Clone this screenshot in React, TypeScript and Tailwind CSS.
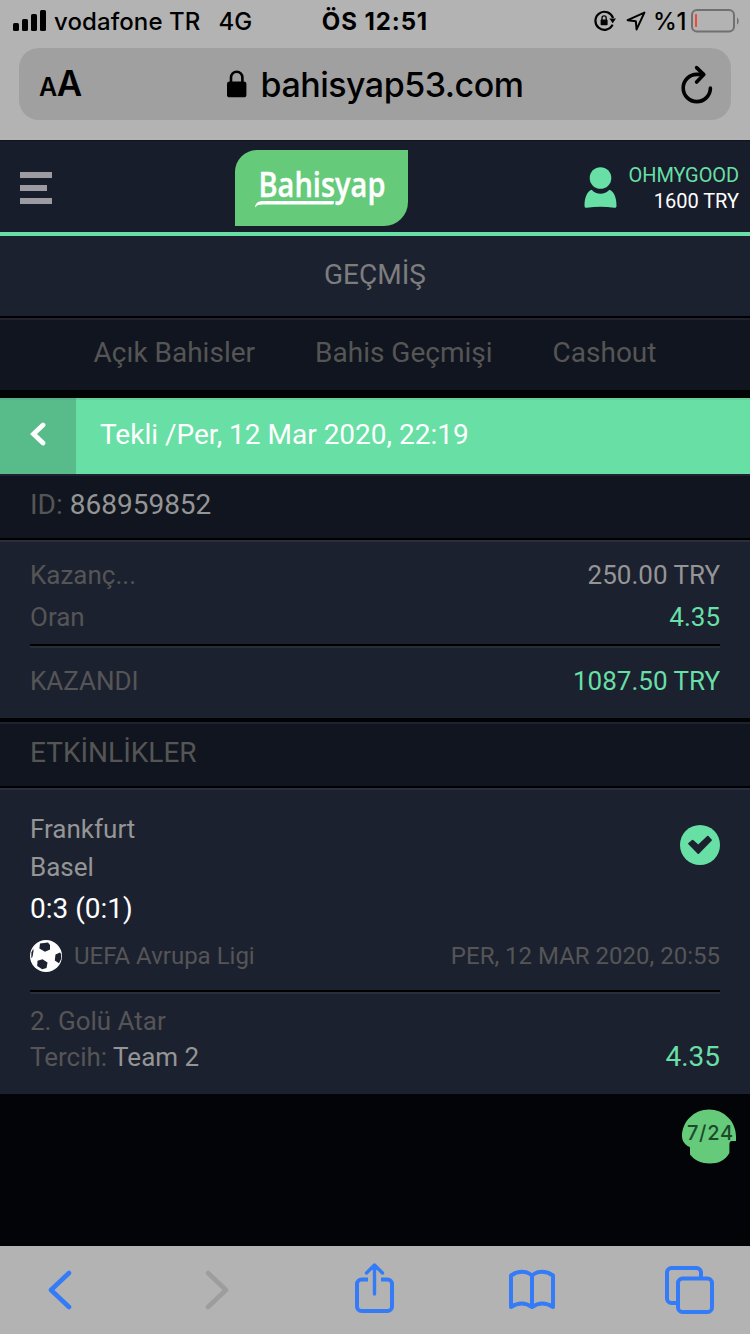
import type { ReactNode } from "react";

const tabs = ["Açık Bahisler", "Bahis Geçmişi", "Cashout"];

function StatusBar() {
  return (
    <div className="grid h-10 grid-cols-[1fr_auto_1fr] items-center text-2xl leading-10 font-medium text-black">
      <div className="flex items-center pl-[13px]">
        <svg width="34" height="22" viewBox="0 0 34 22" className="shrink-0">
          <rect x="0" y="13" width="6" height="8" rx="1.6" />
          <rect x="9" y="9" width="6" height="12" rx="1.6" />
          <rect x="18" y="4" width="6" height="17" rx="1.6" />
          <rect x="27" y="0" width="6" height="21" rx="1.6" />
        </svg>
        <span className="ml-[7px] pt-0.5 tracking-[0.1px]">vodafone TR</span>
        <span className="ml-[18px] pt-0.5">4G</span>
      </div>
      <span className="pt-0.5 font-bold tracking-[0.9px]">ÖS 12:51</span>
      <div className="flex items-center justify-end pr-[10px]">
        <svg width="22" height="22" viewBox="0 0 22 22" className="shrink-0">
          <path d="M18.6 14.6A9 9 0 1 1 19 8" fill="none" stroke="#000" strokeWidth="2.2" />
          <path d="M15.4 8.6h6.6l-3.3 4.6z" />
          <rect x="6.6" y="9.6" width="7" height="5.6" rx="0.8" />
          <path d="M8 10V8a2.1 2.1 0 0 1 4.2 0v2" fill="none" stroke="#000" strokeWidth="1.3" />
        </svg>
        <svg width="20" height="20" viewBox="0 0 20 20" className="ml-[10px] shrink-0">
          <path
            d="M18.4 1.6 1.6 9.2l8.2 1 .8 8.2z"
            fill="none"
            stroke="#000"
            strokeWidth="2"
            strokeLinejoin="round"
          />
        </svg>
        <span className="ml-[7px] pt-0.5 tracking-[-0.4px]">%1</span>
        <svg width="49" height="24" viewBox="0 0 49 24" className="ml-[5px] shrink-0">
          <rect x="1" y="1" width="42" height="21.5" rx="5" fill="none" stroke="#707070" strokeWidth="2" />
          <rect x="4" y="5" width="2" height="13" rx="0.6" fill="#f0493a" />
          <path d="M46 8.4c2.2 1 2.2 6 0 7z" fill="#707070" />
        </svg>
      </div>
    </div>
  );
}

function AddressBar() {
  return (
    <div className="mx-[19px] mt-2 flex h-[72px] items-center justify-between rounded-[20px] bg-[#a0a0a0] text-black">
      <div className="-mt-0.5 flex w-20 items-baseline pl-5 font-semibold">
        <span className="text-[25px] tracking-[-0.5px]">A</span>
        <span className="text-[35px] tracking-[-1px]">A</span>
      </div>
      <div className="flex items-center">
        <svg width="20" height="28" viewBox="0 0 20 28">
          <rect x="0" y="11.5" width="19.4" height="15.8" rx="2.6" />
          <path d="M4 13V7.4a5.7 5.7 0 0 1 11.4 0V13" fill="none" stroke="#000" strokeWidth="2.6" />
        </svg>
        <span className="ml-[14px] pt-px text-[34px] leading-[70px] font-medium tracking-[-0.5px]">
          bahisyap53.com
        </span>
      </div>
      <div className="flex w-20 justify-end pt-px pr-[17px]">
        <svg width="34" height="40" viewBox="0 0 34 40" fill="none" stroke="#000" strokeWidth="3.6" strokeLinecap="round" strokeLinejoin="round">
          <path d="M30.4 23a13.6 13.6 0 1 1-13.6-13.6h6.6" />
          <path d="m16.6 2.6 7.2 7-7.2 7.4" />
        </svg>
      </div>
    </div>
  );
}

function SiteHeader() {
  return (
    <header className="flex h-24 items-center justify-between border-t border-b-4 border-t-[#11131d] border-b-[#67dfa5] bg-[#181d2b] pt-0.5">
      <div className="flex w-[235px] flex-col gap-[7px] pl-5">
        <span className="h-1.5 w-8 bg-[#9c9ba2]" />
        <span className="h-1.5 w-[27px] bg-[#9c9ba2]" />
        <span className="h-1.5 w-8 bg-[#9c9ba2]" />
      </div>
      <svg width="173" height="76" viewBox="0 0 173 76">
        <path d="M22 0H173V52a24 24 0 0 1-24 24H0V22A22 22 0 0 1 22 0z" fill="#65ca7a" />
        <text
          x="23.5"
          y="47"
          textLength="127"
          lengthAdjust="spacingAndGlyphs"
          fill="#fff"
          stroke="#fff"
          strokeWidth="0.4"
          fontSize="34"
          fontWeight="600"
          fontFamily="'Open Sans', 'Noto Sans', sans-serif"
        >
          Bahisyap
        </text>
        <path d="M20 57.4c.6-4.4 3-6.400 8-6.400h70.600c.6 1.600.4 2.600-.6 3.400H28c-4 0-6 .6-8 3z" fill="#fff" />
      </svg>
      <div className="flex w-[342px] items-center justify-end gap-3 pr-[11px]">
        <svg width="34" height="42" viewBox="0 0 34 42" fill="#67dfa5">
          <circle cx="17.500" cy="11" r="10.800" />
          <path d="M8.600 22.700c4.600 5.400 13.200 5.400 17.800 0 4.400 1.600 7.200 7.600 7.100 16 0 1.600-.8 2.200-2.300 2-9-1.200-18-1.200-27.400 0-1.500.2-2.300-.4-2.300-2 0-8.400 2.700-14.400 7.100-16z" />
        </svg>
        <div className="text-right text-xl leading-[26px]">
          <p className="tracking-[-0.1px] text-[#67dfa5]">OHMYGOOD</p>
          <p className="text-white">1600 TRY</p>
        </div>
      </div>
    </header>
  );
}

function Divider() {
  return <div className="h-1 border-t-2 border-t-black bg-[#282d3b]" />;
}

function Row({ label, children }: { label: string; children: ReactNode }) {
  return (
    <div className="flex justify-between text-[26px] leading-[42px]">
      <span className="text-[#555556]">{label}</span>
      {children}
    </div>
  );
}

function BetSummary() {
  return (
    <section className="h-[182px] border-t-2 border-b-4 border-t-[#2a2d3e] border-b-[#010305] bg-[#1c2130] px-[30px] pt-3">
      <Row label="Kazanç...">
        <span className="text-[#959595]">250.00 TRY</span>
      </Row>
      <Row label="Oran">
        <span className="text-[#67dfa5]">4.35</span>
      </Row>
      <div className="mt-1.5 mb-3">
        <Divider />
      </div>
      <Row label="KAZANDI">
        <span className="text-[#67dfa5]">1087.50 TRY</span>
      </Row>
    </section>
  );
}

function Ball() {
  return (
    <svg width="32" height="32" viewBox="0 0 32 32">
      <circle cx="16" cy="16" r="16" fill="#fff" />
      <g fill="#1c2130">
        <path d="M10 3.400 18 2.600 20 5v4.500l-5 2.300-5.600-3.400z" />
        <path d="m25.500 14.500 4.500-2 1.200 1.700v4.600L29 23.200l-4.200-2.600z" />
        <path d="m7.500 20.700 5-1.400 5 3.300-1 5.400-4.300 1.300-5-3.300z" />
        <path d="M1.400 12.500 3.200 8.800l.3 2.200-1 5.800-1.200 1.400z" />
      </g>
    </svg>
  );
}

function EventCard() {
  return (
    <section className="h-[306px] border-t-2 border-t-[#2a2d3e] bg-[#1c2130] px-[30px] pt-5">
      <div className="flex items-start justify-between text-[26px] leading-[38px] text-[#959595]">
        <div>
          <p>Frankfurt</p>
          <p>Basel</p>
          <p className="pt-0.5 text-[28px] leading-[42px] text-white">0:3 (0:1)</p>
        </div>
        <svg width="40" height="40" viewBox="0 0 40 40" className="mt-[15px]">
          <circle cx="20" cy="20" r="20" fill="#67dfa5" />
          <path
            d="m9 18.600 3.600-3 5.700 5 9.500-9 3.200 3.600-12.700 12.800z"
            fill="#1c2130"
            stroke="#1c2130"
            strokeWidth="1.800"
            strokeLinejoin="round"
          />
        </svg>
      </div>
      <div className="mt-[10px] flex h-8 items-center text-2xl text-[#555556]">
        <Ball />
        <span className="ml-3 flex-1">UEFA Avrupa Ligi</span>
        <span>PER, 12 MAR 2020, 20:55</span>
      </div>
      <div className="mt-[18px] mb-[9px]">
        <Divider />
      </div>
      <div className="flex items-end justify-between text-[26px] leading-9 text-[#555556]">
        <div>
          <p>2. Golü Atar</p>
          <p>
            Tercih: <span className="text-[#959595]">Team 2</span>
          </p>
        </div>
        <span className="text-[28px] text-[#67dfa5]">4.35</span>
      </div>
    </section>
  );
}

function SupportBadge() {
  return (
    <svg width="62" height="62" viewBox="0 0 62 62">
      <path
        d="M31 3.500C46 3.500 58 15.500 58 30.500v4.500h-4c-2 0-2.600 1.500-2.600 4v8c-4 7.500-11 10.500-19.400 10.500-8.500 0-15.500-3-20-9v-6.500c0-1-1-1.500-2.500-2C6 37.500 4 34.500 4 30.500 4 15.500 16 3.500 31 3.500z"
        fill="#65ca7a"
      />
      <text
        x="9"
        y="34"
        textLength="46"
        lengthAdjust="spacing"
        fill="#1c4a2b"
        fontSize="20"
        fontWeight="500"
        fontFamily="Inter, sans-serif"
      >
        7/24
      </text>
    </svg>
  );
}

function Toolbar() {
  return (
    <nav className="flex h-[88px] bg-[#b3b3b3]">
      <svg
        width="750"
        height="88"
        viewBox="0 0 750 88"
        fill="none"
        stroke="#347cf7"
        strokeWidth="4"
        strokeLinecap="round"
        strokeLinejoin="round"
      >
        <path d="M69 27 51 44l18 17" strokeWidth="4.600" />
        <path d="m208 27 18 17-18 17" stroke="#9d9d9d" strokeWidth="4.600" />
        <path d="M368 33.500h-6.500a4.500 4.500 0 0 0-4.500 4.500v22.500a4.500 4.500 0 0 0 4.500 4.500h26a4.500 4.500 0 0 0 4.500-4.500V38a4.500 4.500 0 0 0-4.500-4.500H381" strokeLinecap="butt" />
        <path d="M374.500 48V19.500M366.500 27l8-8 8 8" strokeWidth="3.400" />
        <path d="M532 29.500c-5.500-5-14-5-21 0V61c7-4.400 14.500-4.400 21 0 6.500-4.400 14-4.400 21 0V29.500c-7-5-15.500-5-21 0zM532 29.500V61" />
        <path d="M701 32v-5.500a4.500 4.500 0 0 0-4.500-4.500h-25a4.500 4.500 0 0 0-4.500 4.500v26a4.500 4.500 0 0 0 4.500 4.500H677" strokeLinecap="butt" />
        <rect x="678" y="32.500" width="34" height="33.500" rx="4.500" />
      </svg>
    </nav>
  );
}

export default function App() {
  return (
    <div className="flex h-[1334px] w-[750px] flex-col overflow-hidden bg-[#030407] font-['Roboto',sans-serif]">
      <div className="h-[140px] shrink-0 bg-[#b3b3b3] font-['Inter',sans-serif]">
        <StatusBar />
        <AddressBar />
      </div>
      <SiteHeader />

      <h1 className="h-[82px] border-b-2 border-b-black bg-[#1c2130] text-center text-[28px] leading-[77px] text-[#7d7d7e]">
        GEÇMİŞ
      </h1>
      <div className="flex h-20 justify-center gap-[60px] border-t-2 border-b-8 border-t-[#20222f] border-b-[#010305] bg-[#11151f] text-[28px] leading-[65px] text-[#555556]">
        {tabs.map((tab) => (
          <span key={tab}>{tab}</span>
        ))}
      </div>

      <div className="flex h-[76px] bg-[#67dfa5] text-[28px] leading-[73px] text-white">
        <button className="flex w-[76px] items-center justify-center border-t-2 border-t-[#56b088] bg-[#57bb8a]">
          <svg width="16" height="26" viewBox="0 0 16 26" className="-mt-[7px]">
            <path d="m13 4-9.500 9 9.500 9" fill="none" stroke="#fff" strokeWidth="4.800" strokeLinecap="round" />
          </svg>
        </button>
        <span className="flex-1 border-t-2 border-t-[#64d19d] pl-6 leading-[69px]">
          Tekli /Per, 12 Mar 2020, 22:19
        </span>
      </div>

      <div className="h-[66px] border-t-2 border-b-2 border-t-[#20222f] border-b-black bg-[#11151f] px-[30px] text-[28px] leading-[58px] text-[#555556]">
        ID: <span className="text-[#959595]">868959852</span>
      </div>
      <BetSummary />
      <h2 className="h-[66px] border-t-2 border-b-2 border-t-[#20222f] border-b-black bg-[#11151f] px-[30px] text-[28px] leading-[58px] text-[#555556]">
        ETKİNLİKLER
      </h2>
      <EventCard />

      <div className="flex flex-1 items-start justify-end pt-3 pr-[10px]">
        <SupportBadge />
      </div>
      <Toolbar />
    </div>
  );
}
